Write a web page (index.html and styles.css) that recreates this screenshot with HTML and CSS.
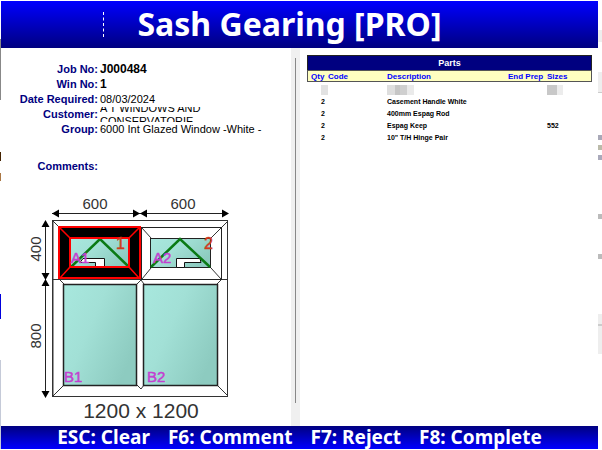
FILE: index.html
```
<!DOCTYPE html>
<html lang="en">
<head>
    <meta charset="utf-8">
    <title>Sash Gearing [PRO]</title>
    <link rel="stylesheet" href="styles.css">
</head>
<body>
    <div class="edge edge-left"></div>
    <div class="station">
        <header class="title-bar">
            <span class="marker"></span>
            <h1>Sash Gearing [PRO]</h1>
        </header>
        <main class="panes">
            <section class="job">
                <dl class="details">
                    <dt>Job No:</dt><dd class="strong">J000484</dd>
                    <dt>Win No:</dt><dd class="strong">1</dd>
                    <dt>Date Required:</dt><dd>08/03/2024</dd>
                    <dt>Customer:</dt><dd class="customer"><span>A T WINDOWS AND CONSERVATORIE</span></dd>
                    <dt>Group:</dt><dd>6000 Int Glazed Window -White -</dd>
                    <dt class="comments">Comments:</dt><dd class="comments"></dd>
                </dl>
                <svg class="drawing" viewBox="20 190 240 235" role="img" aria-label="Window drawing">
                    <defs>
                        <linearGradient id="glass" x1="0" y1="0" x2="1" y2="0.6">
                            <stop offset="0" stop-color="#a8e8de"/>
                            <stop offset="0.45" stop-color="#a2e0d6"/>
                            <stop offset="1" stop-color="#8dcbc0"/>
                        </linearGradient>
                    </defs>

                    <!-- dimensions -->
                    <g stroke="#222">
                        <path d="M52 213.5H228M45.5 222V397"/>
                    </g>
                    <path d="M52 213.5l7-4v8zM140 213.5l-7-4v8zM140 213.5l7-4v8zM229 213.5l-7-4v8z"/>
                    <path d="M45.5 220l-4 7h8zM45.5 280l-4-7h8zM45.5 279l-4 7h8zM45.5 398l-4-7h8z"/>
                    <g class="dimension">
                        <text x="95" y="209">600</text>
                        <text x="183" y="209">600</text>
                        <text transform="translate(41 249) rotate(-90)">400</text>
                        <text transform="translate(41 336) rotate(-90)">800</text>
                    </g>

                    <!-- outer frame -->
                    <g fill="none" stroke="#333">
                        <rect x="52.5" y="220.5" width="175" height="176"/>
                        <path d="M53.5 221V396" stroke="#999"/>
                        <path d="M53 279.5H228M53 221l6 6M228 221l-7 7M53 396l11-11M228 396l-11-11"/>
                        <path d="M60 280l4 4M137 284l4-4 3 4M221 280l-4 4M137 385l4 4 3-4"/>
                    </g>

                    <!-- bottom lights -->
                    <g fill="url(#glass)" stroke="#222" stroke-width="1.5">
                        <rect x="63.5" y="284.5" width="73" height="101"/>
                        <rect x="143.5" y="284.5" width="74" height="101"/>
                    </g>

                    <!-- sash A2 -->
                    <rect x="141.5" y="227.5" width="80" height="52" fill="#fff" stroke="#222"/>
                    <path d="M142 228l9 10M221 228l-10 10M142 279l9-11M221 279l-10-11" stroke="#333"/>
                    <rect x="150.5" y="238.5" width="60" height="29" fill="url(#glass)" stroke="#222"/>
                    <path d="M176.5 267.5v-9H200l1 4h-16.500v5z" fill="#fff" stroke="#111"/>
                    <path class="opening" d="M151 267l29-28 30 28"/>

                    <!-- sash A1, selected -->
                    <rect x="59" y="227" width="81" height="51" fill="#000" stroke="#f00" stroke-width="2"/>
                    <path d="M60 228l10 10M139 228l-10 10M60 278l10-11M139 278l-10-11" stroke="#f00" stroke-width="1.5"/>
                    <rect x="70" y="238" width="59" height="29" fill="url(#glass)"/>
                    <path d="M104.500 267.500v-9H83l-3 4h15.500v5z" fill="#fff" stroke="#111"/>
                    <path class="opening" d="M71 267l29-28 29 28"/>
                    <rect x="70" y="238" width="59" height="29" fill="none" stroke="#f00" stroke-width="2"/>

                    <g class="light-name">
                        <text x="71" y="263">A1</text>
                        <text x="153" y="263">A2</text>
                        <text x="64" y="382">B1</text>
                        <text x="147" y="382">B2</text>
                    </g>
                    <g class="sash-no">
                        <text x="116" y="249">1</text>
                        <text x="204" y="249">2</text>
                    </g>
                    <text class="overall" x="141" y="418">1200 x 1200</text>
                </svg>
            </section>
            <div class="splitter"></div>
            <section class="parts-pane">
                <table class="parts">
                    <caption>Parts</caption>
                    <thead>
                        <tr>
                            <th class="qty">Qty</th>
                            <th class="code">Code</th>
                            <th>Description</th>
                            <th class="prep">End Prep</th>
                            <th class="sizes">Sizes</th>
                        </tr>
                    </thead>
                    <tbody>
                        <tr class="masked">
                            <td class="qty"><i class="mask mask-qty"></i></td><td></td>
                            <td><i class="mask mask-name"></i></td><td></td>
                            <td><i class="mask mask-size"></i></td>
                        </tr>
                        <tr><td class="qty">2</td><td></td><td>Casement Handle White</td><td></td><td></td></tr>
                        <tr><td class="qty">2</td><td></td><td>400mm Espag Rod</td><td></td><td></td></tr>
                        <tr><td class="qty">2</td><td></td><td>Espag Keep</td><td></td><td>552</td></tr>
                        <tr><td class="qty">2</td><td></td><td>10" T/H Hinge Pair</td><td></td><td></td></tr>
                    </tbody>
                </table>
            </section>
        </main>
        <footer class="keys">
            <button type="button">ESC: Clear</button>
            <button type="button">F6: Comment</button>
            <button type="button">F7: Reject</button>
            <button type="button">F8: Complete</button>
        </footer>
    </div>
    <div class="edge edge-right"></div>
</body>
</html>
```
FILE: styles.css
```
* {
    box-sizing: border-box;
}
body {
    margin: 0;
    padding: 1px 0;
    height: 100vh;
    display: flex;
    background: #fff;
    font-family: "Liberation Sans", Arial, sans-serif;
    font-size: 11px;
    color: #000;
}
/* slivers of the window behind */
.edge-left {
    width: 1px;
    background: linear-gradient(#fff 38px, #888 38px 99px, #fff 99px 151px, #420 151px 160px, #fff 160px 172px, #a74 172px 180px, #fff 180px 293px, #00d 293px 318px, #fff 318px 359px, #c5cad8 359px);
}
.edge-right {
    width: 4px;
    background: linear-gradient(#fff 29px, #eee 29px 41px, #fff 41px 71px, #eee 71px 91px, #ccc 91px 92px, #fff 92px 134px, #a9a9b8 134px 139px, #fff 139px 144px, #bba 144px 149px, #fff 149px 154px, #aab 154px 159px, #fff 159px 213px, #bbb 213px 218px, #fff 218px 253px, #bbb 253px 258px, #fff 258px 313px, #eee 313px 323px, #ccc 323px 325px, #eee 325px 353px, #fff 353px);
}
.station {
    flex: 1;
    display: flex;
    flex-direction: column;
    min-width: 0;
}
.title-bar {
    display: grid;
    grid-template-columns: 1fr auto 1fr;
    align-items: center;
    height: 47px;
    padding-right: 20px;
    background: linear-gradient(#0000ff, #000080);
    color: #fff;
}
.marker {
    justify-self: end;
    height: 25px;
    margin-right: 33px;
    border-left: 1px dashed #fff;
}
.title-bar h1 {
    grid-column: 2;
    margin: 0;
    font: bold 32px/43px "Noto Sans", Tahoma, sans-serif;
    padding-bottom: 2px;
}
.panes {
    flex: 1;
    display: flex;
    min-height: 0;
}
.job {
    width: 290px;
    padding-top: 14px;
}
.details {
    display: grid;
    grid-template-columns: 97px 1fr;
    column-gap: 2px;
    margin: 0;
    line-height: 15px;
}
.details dt {
    text-align: right;
    font-weight: bold;
    color: #000080;
}
.details dd {
    margin: 0;
}
.details .strong {
    font-weight: bold;
    font-size: 12px;
}
.details .customer {
    display: flex;
    align-items: center;
    width: 120px;
    height: 15px;
    line-height: 13px;
    overflow: hidden;
}
.details .comments {
    margin-top: 22px;
}
.drawing {
    display: block;
    width: 240px;
    margin: 16px 0 0 19px;
}
.dimension {
    font-size: 15px;
    fill: #333;
    text-anchor: middle;
}
.light-name {
    font-size: 15px;
    fill: #c33fd0;
    stroke: #c33fd0;
    stroke-width: 0.5px;
}
.sash-no {
    font-size: 16px;
    fill: #d03a1c;
    stroke: #d03a1c;
    stroke-width: 0.5px;
}
.overall {
    font-size: 21px;
    fill: #333;
    text-anchor: middle;
}
.opening {
    fill: none;
    stroke: #0a7a14;
    stroke-width: 2.5px;
}
.splitter {
    width: 9px;
    padding: 10px 0 23px 4px;
    background: #f0f0f0;
}
.splitter::before {
    content: "";
    display: block;
    width: 1px;
    height: 100%;
    background: #888;
}
.parts-pane {
    flex: 1;
    padding: 7px 6px 0 7px;
}
.parts {
    width: 100%;
    table-layout: fixed;
    border-collapse: collapse;
    font-size: 7px;
    font-weight: bold;
}
.parts caption {
    height: 15px;
    background: #000080;
    border: 1px solid #222;
    border-bottom: 0;
    color: #fff;
    font-size: 9px;
    line-height: 14px;
}
.parts thead {
    background: #ffffc0;
    outline: 1px solid #555;
    outline-offset: -1px;
    color: #0000ff;
}
.parts th,
.parts td {
    padding: 0;
    height: 12px;
    line-height: 11px;
    text-align: left;
    white-space: nowrap;
}
.parts th {
    font-size: 8px;
}
.parts .qty {
    width: 21px;
    padding-left: 4px;
}
.parts td.qty {
    padding-left: 14px;
}
.parts .code {
    width: 59px;
}
.parts .prep {
    width: 39px;
}
.parts .sizes {
    width: 45px;
}
.parts .masked td {
    height: 13px;
    vertical-align: bottom;
}
.mask {
    display: block;
    height: 10px;
    background: linear-gradient(90deg, #dedede 30%, #c6c6c6 30% 50%, #cfcfcf 50% 75%, #eaeaea 75%);
}
.mask-qty {
    width: 7px;
    background: #e2e2e2;
}
.mask-name {
    width: 27px;
}
.mask-size {
    width: 16px;
    background: linear-gradient(90deg, #c8c8c8 60%, #ececec 60%);
}
.keys {
    display: flex;
    justify-content: center;
    gap: 18px;
    height: 23px;
    background: linear-gradient(#000080, #0000ff);
}
.keys button {
    padding: 0;
    border: 0;
    background: none;
    color: #fff;
    font: bold 19px/23px "Noto Sans", Tahoma, sans-serif;
    white-space: nowrap;
    cursor: pointer;
}
```
